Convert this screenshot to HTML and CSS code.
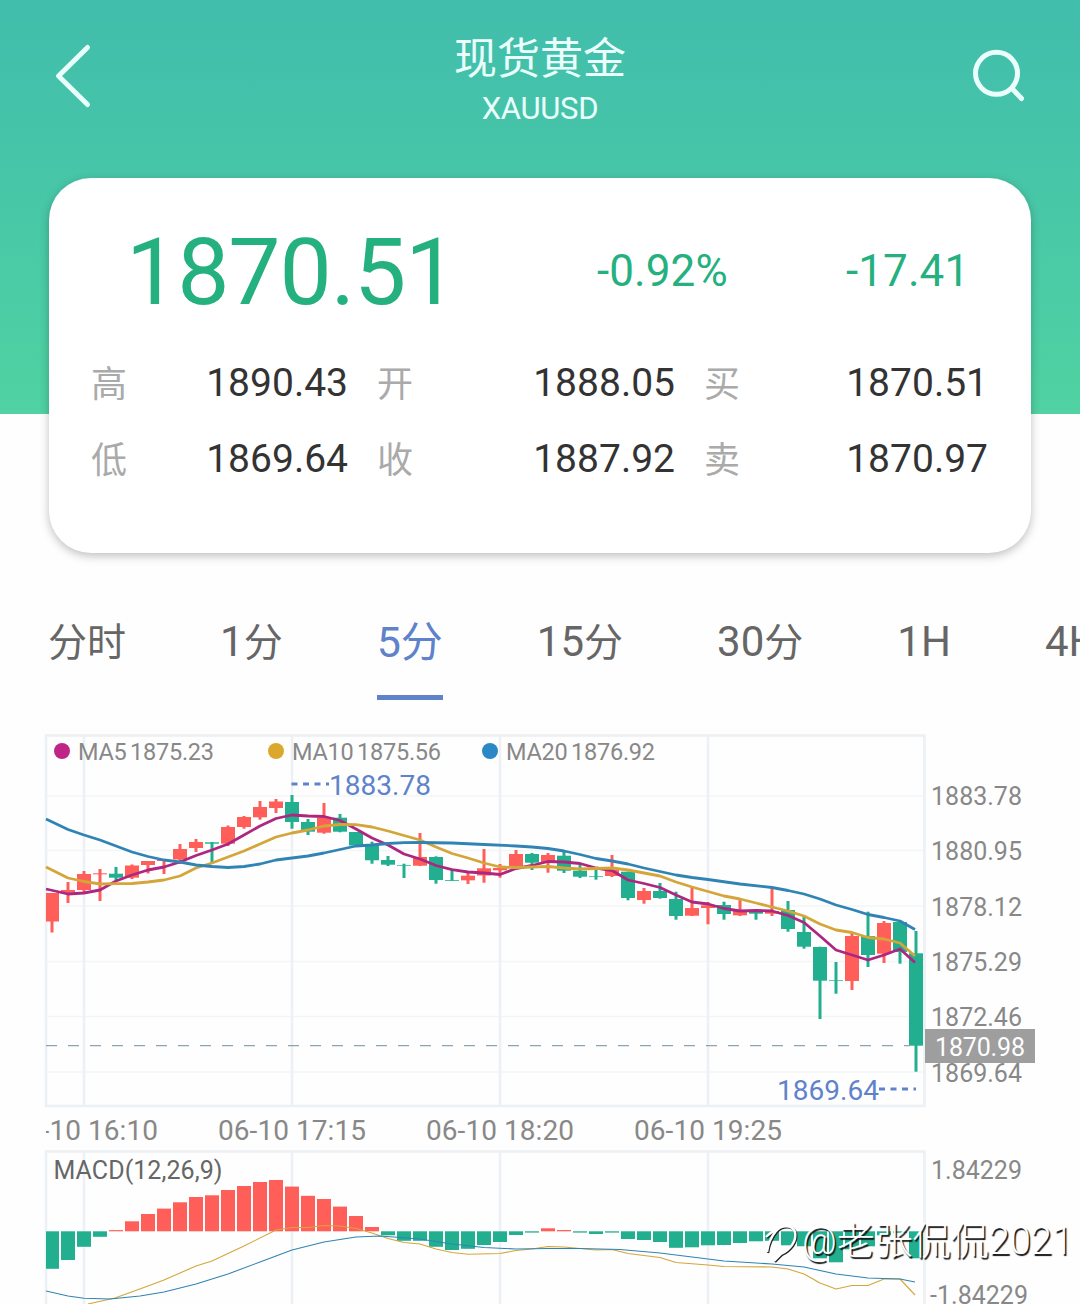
FILE: index.html
```html
<!DOCTYPE html>
<html lang="zh-CN">
<head>
  <meta charset="UTF-8">
  <meta name="viewport" content="width=device-width, initial-scale=1">
  <title>现货黄金 XAUUSD</title>
  <link rel="stylesheet" href="styles.css">
</head>
<body>
  <div class="page">
    <header class="header">
      <svg class="back" width="40" height="66" viewBox="0 0 40 66" fill="none">
        <path d="M34.5 4.5L5.5 33L34.5 61.5" stroke="currentColor" stroke-width="5" stroke-linecap="round" stroke-linejoin="round"/>
      </svg>
      <div class="title">
        <h1>现货黄金</h1>
        <span>XAUUSD</span>
      </div>
      <svg class="search" width="56" height="56" viewBox="0 0 56 56" fill="none">
        <circle cx="26.5" cy="26.3" r="21" stroke="currentColor" stroke-width="5"/>
        <path d="M42 41.5L51.5 51.5" stroke="currentColor" stroke-width="5" stroke-linecap="round"/>
      </svg>
    </header>

    <section class="card">
      <div class="quote">
        <span class="price">1870.51</span>
        <span class="percent">-0.92%</span>
        <span class="change">-17.41</span>
      </div>
      <div class="stats">
        <div class="stat"><label>高</label><span>1890.43</span></div>
        <div class="stat"><label>开</label><span>1888.05</span></div>
        <div class="stat"><label>买</label><span>1870.51</span></div>
        <div class="stat"><label>低</label><span>1869.64</span></div>
        <div class="stat"><label>收</label><span>1887.92</span></div>
        <div class="stat"><label>卖</label><span>1870.97</span></div>
      </div>
    </section>

    <nav class="tabs">
      <div class="tab"><i>分时</i></div>
      <div class="tab">1<i>分</i></div>
      <div class="tab active">5<i>分</i></div>
      <div class="tab">15<i>分</i></div>
      <div class="tab">30<i>分</i></div>
      <div class="tab">1H</div>
      <div class="tab">4H</div>
    </nav>

    <div class="chart">
      <svg width="1080" height="570" viewBox="0 734 1080 570">
        <defs>
          <clipPath id="plot"><rect x="46" y="734" width="879" height="570"/></clipPath>
        </defs>

        <!-- grid -->
        <path class="grid-thin" d="M46 796H925M46 850.5H925M46 906H925M46 961.5H925M46 1016.5H925M46 1072H925"/>
        <path class="grid" d="M84 736V1106M292 736V1106M500 736V1106M708 736V1106M84 1152V1304M292 1152V1304M500 1152V1304M708 1152V1304"/>
        <rect class="frame" x="46" y="735.5" width="878.5" height="370.5"/>
        <rect class="frame" x="46" y="1151.5" width="878.5" height="170"/>

        <g id="candles" clip-path="url(#plot)"></g>
        <path class="last-line" d="M46 1045.7H910"/>
        <g id="averages"></g>
        <g id="macd" clip-path="url(#plot)"></g>

        <!-- legend -->
        <circle class="dot ma5" cx="62" cy="751" r="8"/>
        <text class="legend" x="78" y="760" textLength="136">MA5 1875.23</text>
        <circle class="dot ma10" cx="276" cy="751" r="8"/>
        <text class="legend" x="292" y="760" textLength="149">MA10 1875.56</text>
        <circle class="dot ma20" cx="490" cy="751" r="8"/>
        <text class="legend" x="506" y="760" textLength="149">MA20 1876.92</text>

        <!-- high / low marks -->
        <path class="mark-line" d="M291.500 784H329M879 1089H916"/>
        <text class="mark" x="329" y="795" textLength="102">1883.78</text>
        <text class="mark" x="777" y="1100" textLength="102">1869.64</text>

        <!-- price axis -->
        <g class="axis">
          <text x="931" y="805" textLength="91">1883.78</text>
          <text x="931" y="860" textLength="91">1880.95</text>
          <text x="931" y="916" textLength="91">1878.12</text>
          <text x="931" y="971" textLength="91">1875.29</text>
          <text x="931" y="1026" textLength="91">1872.46</text>
          <text x="931" y="1082" textLength="91">1869.64</text>
          <text x="931" y="1179" textLength="91">1.84229</text>
          <text x="930" y="1303.500" textLength="98">-1.84229</text>
        </g>
        <rect class="tag" x="925" y="1029" width="110" height="34"/>
        <text class="tag-text" x="935" y="1056" textLength="90">1870.98</text>

        <!-- time axis -->
        <g class="times" clip-path="url(#plot)">
          <text x="10" y="1140" textLength="148">06-10 16:10</text>
          <text x="218" y="1140" textLength="148">06-10 17:15</text>
          <text x="426" y="1140" textLength="148">06-10 18:20</text>
          <text x="634" y="1140" textLength="148">06-10 19:25</text>
        </g>
        <text class="macd-title" x="53.500" y="1179" textLength="169">MACD(12,26,9)</text>
      </svg>

      <div class="watermark">
        <svg width="38" height="46" viewBox="0 0 38 46" fill="none">
          <path class="wm-dark" d="M4 35C5 27 8 20 13 14C18 8 29 7 32 15C34 24 27 33 18 37L11 44"/>
          <path class="wm-dark" d="M3 20C6 17 10 14 14 13"/>
          <path class="wm-light" d="M3 34C4 26 7 19 12 13C17 7 28 6 31 14C33 23 26 32 17 36L10 43"/>
          <path class="wm-light" d="M2 19C5 16 9 13 13 12"/>
        </svg>
        <span>@老张侃侃2021</span>
      </div>
    </div>
  </div>
  <script src="chart.js"></script>
</body>
</html>
```
FILE: styles.css
```css
:root {
  --up: #ff5f58;
  --down: #22af90;
  --green: #25b07f;
  --blue: #5f82cb;
  --grid: #edf1f4;
  --text: #333;
  --muted: #888;
}

html, body {
  margin: 0;
  padding: 0;
  font-family: Roboto, 'Noto Sans CJK SC', sans-serif;
}

body {
  background: #fefefe;
  color: var(--text);
}

.page {
  width: 1080px;
  height: 1304px;
  overflow: hidden;
  background: linear-gradient(180deg, #41bdac 0%, #50d2a2 100%) no-repeat;
  background-size: 100% 414px;
}

.header {
  height: 178px;
  padding: 0 53px;
  box-sizing: border-box;
  display: flex;
  justify-content: space-between;
  align-items: flex-start;
  color: #eafffb;
}

.back {
  margin-top: 43px;
}

.search {
  margin: 47px 1px 0 0;
}

.title {
  text-align: center;
  margin: 34px 0 0 17px;
}

.title h1 {
  margin: 0;
  font-size: 43px;
  line-height: 50px;
  font-weight: 400;
}

.title span {
  display: block;
  font-size: 31px;
  line-height: 36px;
  margin-top: 7px;
  letter-spacing: -0.3px;
}

.card {
  height: 375px;
  margin: 0 49px;
  padding: 40px 42px 0;
  box-sizing: border-box;
  background: #fff;
  border-radius: 42px;
  box-shadow: 0 3px 10px rgba(0, 0, 0, 0.25);
}

.quote {
  display: grid;
  grid-template-columns: 506px 249px 1fr;
  height: 108px;
  align-items: center;
  color: var(--green);
}

.price {
  font-size: 93px;
  letter-spacing: -1.1px;
  padding-left: 35px;
}

.percent,
.change {
  font-size: 44px;
  letter-spacing: 0.1px;
  padding-bottom: 3px;
}

.stats {
  display: grid;
  grid-template-columns: 257px 298px 284px;
  grid-auto-rows: 76px;
  column-gap: 29px;
  margin-top: 19px;
}

.stat {
  display: flex;
  justify-content: space-between;
  align-items: center;
  font-size: 39px;
}

.stat label {
  font-size: 36px;
  color: #aaa;
  padding-bottom: 4px;
}

.tabs {
  display: flex;
  gap: 94px;
  height: 146px;
  margin-top: 35px;
  padding-left: 48px;
  box-sizing: border-box;
  color: #666;
}

.tab {
  flex: none;
  height: 112px;
  box-sizing: border-box;
  line-height: 108px;
  font-size: 42px;
  white-space: nowrap;
}

.tab i {
  font-style: normal;
  font-size: 39px;
}

.tab.active {
  color: var(--blue);
  border-bottom: 5px solid var(--blue);
  font-size: 43px;
}

.tab.active i {
  font-size: 42px;
}

.chart {
  position: relative;
}

.chart > svg {
  display: block;
}

.grid,
.frame {
  fill: none;
  stroke: var(--grid);
  stroke-width: 2.6;
}

.grid-thin {
  stroke: #f3f5f7;
  stroke-width: 1.3;
}

.up {
  fill: var(--up);
}

.down {
  fill: var(--down);
}

.line {
  fill: none;
  stroke-width: 2.8;
  stroke-linejoin: round;
}

.line.thin {
  stroke-width: 1.1;
}

.line.ma5 { stroke: #ad2780; }
.line.ma10 { stroke: #d4a63a; }
.line.ma20 { stroke: #2f84b5; }

.dot.ma5 { fill: #bf2587; }
.dot.ma10 { fill: #dba82d; }
.dot.ma20 { fill: #2988c5; }

.last-line {
  stroke: #8aa3b5;
  stroke-width: 1.3;
  stroke-dasharray: 11 11;
}

.legend {
  font-size: 23.5px;
  word-spacing: -2px;
  fill: var(--muted);
}

.mark {
  font-size: 28px;
  fill: var(--blue);
}

.mark-line {
  stroke: var(--blue);
  stroke-width: 3;
  stroke-dasharray: 6 5.5;
}

.axis {
  font-size: 25px;
  fill: var(--muted);
}

.times {
  font-size: 28px;
  fill: var(--muted);
}

.macd-title {
  font-size: 25px;
  fill: #666;
}

.tag {
  fill: #9e9e9e;
}

.tag-text {
  font-size: 25px;
  fill: #fff;
}

.watermark {
  position: absolute;
  left: 764px;
  top: 482px;
  display: flex;
  align-items: center;
  color: #fff;
  font-size: 38px;
  font-weight: 300;
  line-height: 50px;
  white-space: nowrap;
  text-shadow: 1.5px 1.5px 1px #111;
}

.wm-dark {
  stroke: #222;
  stroke-width: 2.4;
}

.wm-light {
  stroke: #fff;
  stroke-width: 2.4;
}
```
FILE: chart.js
```js
// one row per 5 minute bar: direction, high, body top, body bottom, low
const candles = [
  ['up', 893, 893, 921.5, 932.5], ['up', 882, 890, 892.7, 903], ['up', 871, 874, 890, 892],
  ['up', 869, 873.3, 874.3, 901], ['down', 867, 873.7, 877.7, 880], ['up', 864.5, 865.5, 877.7, 879],
  ['up', 861, 861, 865, 873.5], ['up', 860, 860, 861, 874], ['up', 844, 849, 859.5, 864],
  ['up', 839, 842, 848, 852], ['down', 842, 842.3, 843.7, 863], ['up', 825.5, 827, 843.7, 846],
  ['up', 816, 817, 827, 828.7], ['up', 801, 807, 817.3, 819.7], ['up', 799, 801.5, 808, 813],
  ['down', 795, 802, 822, 828.7], ['down', 819, 822, 831.7, 835], ['up', 803, 817.7, 832.7, 833.7],
  ['down', 814, 817.7, 831.7, 832.3], ['down', 832, 832, 845.5, 845.5], ['down', 841.7, 845.3, 860.3, 863.7],
  ['down', 856, 860, 864.7, 866], ['down', 863.7, 865.3, 866, 878], ['up', 833, 857, 865.7, 866],
  ['down', 856.3, 857, 880, 883.7], ['down', 870, 880, 880.8, 880.8], ['up', 873, 875.7, 880.3, 884],
  ['up', 849, 868.3, 875.5, 882.7], ['up', 864, 868, 870.3, 877.7], ['up', 850, 854, 868, 868],
  ['down', 853, 854, 862.7, 870], ['up', 853, 855, 862, 872.7], ['down', 852, 855.7, 870.7, 873],
  ['down', 865, 870.7, 876.7, 878], ['down', 869, 876.2, 876.9, 879.7], ['up', 855, 870, 876, 877],
  ['down', 871.7, 871.7, 898, 900.3], ['up', 888, 891, 900, 903.7], ['down', 883, 891, 898, 898.7],
  ['down', 891.7, 899, 916, 919.7], ['up', 887.7, 908, 915.7, 916], ['up', 902, 905.3, 908, 924.3],
  ['down', 901.7, 905, 914, 919.7], ['up', 899, 911, 915.3, 916], ['down', 910, 911.5, 913.7, 919.7],
  ['up', 888, 911, 913.7, 916], ['down', 901, 910, 929, 931.7], ['down', 917, 932, 946.7, 948.7],
  ['down', 946.7, 947, 980.7, 1019], ['down', 962, 980.2, 980.9, 993.7], ['up', 933, 936, 981, 990],
  ['down', 911.7, 936, 955, 967], ['up', 921, 923, 953.7, 963], ['down', 921.5, 922, 952, 963.7],
  ['down', 931, 953.3, 1045.7, 1071.7]
];

// histogram values, positive above the zero line
const histogram = [
  -37.5, -28.7, -15.5, -5.5, 1.2, 10, 17.3, 22.7, 29, 34.3, 36, 41.3, 45.3, 49.3, 51.3, 44.7, 35.5, 32.3,
  24.7, 15.3, 4.3, -4, -9.5, -9.5, -15.5, -18.7, -17.5, -13.7, -10.7, -3.7, -1.3, 3, 1.3, -1.3, -2.7, -1.3,
  -7.7, -8.7, -10.7, -16.5, -16, -14, -13.7, -11.7, -10, -9.5, -14, -15, -27, -31, -18, -15, -4, -1.5, -27
];

const averages = {
  ma5: '46,889 68,894 84,893 100,890 116,881 132,875 148,870 164,867 180,862 196,855.5 212,850 228,844 244,835 260,826 276,818.5 292,815 308,816 324,816.5 340,820.5 356,829 372,838 388,845 404,854 420,859 436,865.5 452,869.7 468,872 484,873 500,874.5 516,868.5 532,865.5 548,861.5 564,862 580,863.5 596,868 612,870.5 628,880 644,883.5 660,887.5 676,895 692,902 708,904 724,908.5 740,911 756,910.5 772,911 788,915.5 804,922.5 820,936 836,950 852,955 868,960 884,955 900,949 915,962.5',
  ma10: '46,867 68,878 84,881.5 100,884 116,883.7 132,883.5 148,882 164,880 180,876 196,868 212,863 228,857 244,851 260,844 276,837 292,833 308,830 324,826 340,824.5 356,824.7 372,827 388,831 404,835.5 420,840 436,847 452,853.5 468,858 484,863 500,867 516,867.5 532,867 548,866.5 564,868 580,869 596,868.5 612,868 628,870 644,873 660,876 676,882 692,887 708,891.5 724,896 740,899 756,903 772,907 788,911 804,916 820,924 836,930 852,932.5 868,937.5 884,939 900,943 915,956',
  ma20: '46,819 68,829.5 84,835 100,840 116,846 132,852 148,856.5 164,860 180,862 196,865 212,866.5 228,867.5 244,866.5 260,864 276,860 292,858 308,856 324,853 340,849.5 356,846 372,845 388,843.5 404,842.7 420,842.5 452,843 484,844.5 516,846 532,847 548,848.5 564,851 580,854.5 596,858.5 612,861 628,864 644,868 660,871.5 676,875 692,877.5 708,879.5 740,884 772,887.5 788,890.5 804,894 820,899 836,905 852,909.5 868,914.5 884,917.5 900,921 915,929.5'
};

const macdLines = {
  ma10: '88,1304 115,1298 148,1286 164,1280 196,1266 212,1261 244,1246 276,1230 292,1227.5 308,1227.5 324,1225.5 340,1226 356,1228.5 372,1233 388,1238.5 404,1242.5 420,1244 436,1249 452,1252.5 468,1254.3 500,1253.5 516,1250.5 532,1249 548,1246.5 564,1247 596,1250 612,1249.5 628,1253.5 660,1257.5 676,1262.5 708,1265 724,1266.5 772,1267 788,1269 804,1274 820,1283 836,1289 852,1285.5 868,1285.5 884,1279 900,1279 915,1295',
  ma20: '46,1291 68,1296 84,1298.3 110,1299 140,1296 164,1292 196,1284 228,1274 260,1262 292,1250 324,1242 356,1237 380,1236 420,1239 452,1244 484,1247.5 516,1249 548,1248.5 580,1248.5 620,1249.5 660,1253 692,1257 724,1261 772,1264 804,1267 836,1274 868,1278 900,1279 915,1282'
};

const START = 52;
const STEP = 16;
const BODY = 14;
const ZERO = 1231.3;

function rect(cls, x, y, w, h) {
  return `<rect class="${cls}" x="${x}" y="${y}" width="${w}" height="${h}"/>`;
}

function polyline(cls, points) {
  return `<polyline class="line ${cls}" points="${points}"/>`;
}

document.getElementById('candles').innerHTML = candles.map(([dir, high, top, bottom, low], i) => {
  const x = START + i * STEP;
  return rect(dir, x - 1.5, high, 3, low - high) + rect(dir, x - BODY / 2, top, BODY, bottom - top);
}).join('');

document.getElementById('averages').innerHTML =
  Object.entries(averages).map(([name, points]) => polyline(name, points)).join('');

document.getElementById('macd').innerHTML = histogram.map((v, i) => {
  const x = START + i * STEP - BODY / 2;
  return rect(v > 0 ? 'up' : 'down', x, v > 0 ? ZERO - v : ZERO, BODY, Math.abs(v));
}).join('') + Object.entries(macdLines).map(([name, points]) => polyline(name + ' thin', points)).join('');
```
